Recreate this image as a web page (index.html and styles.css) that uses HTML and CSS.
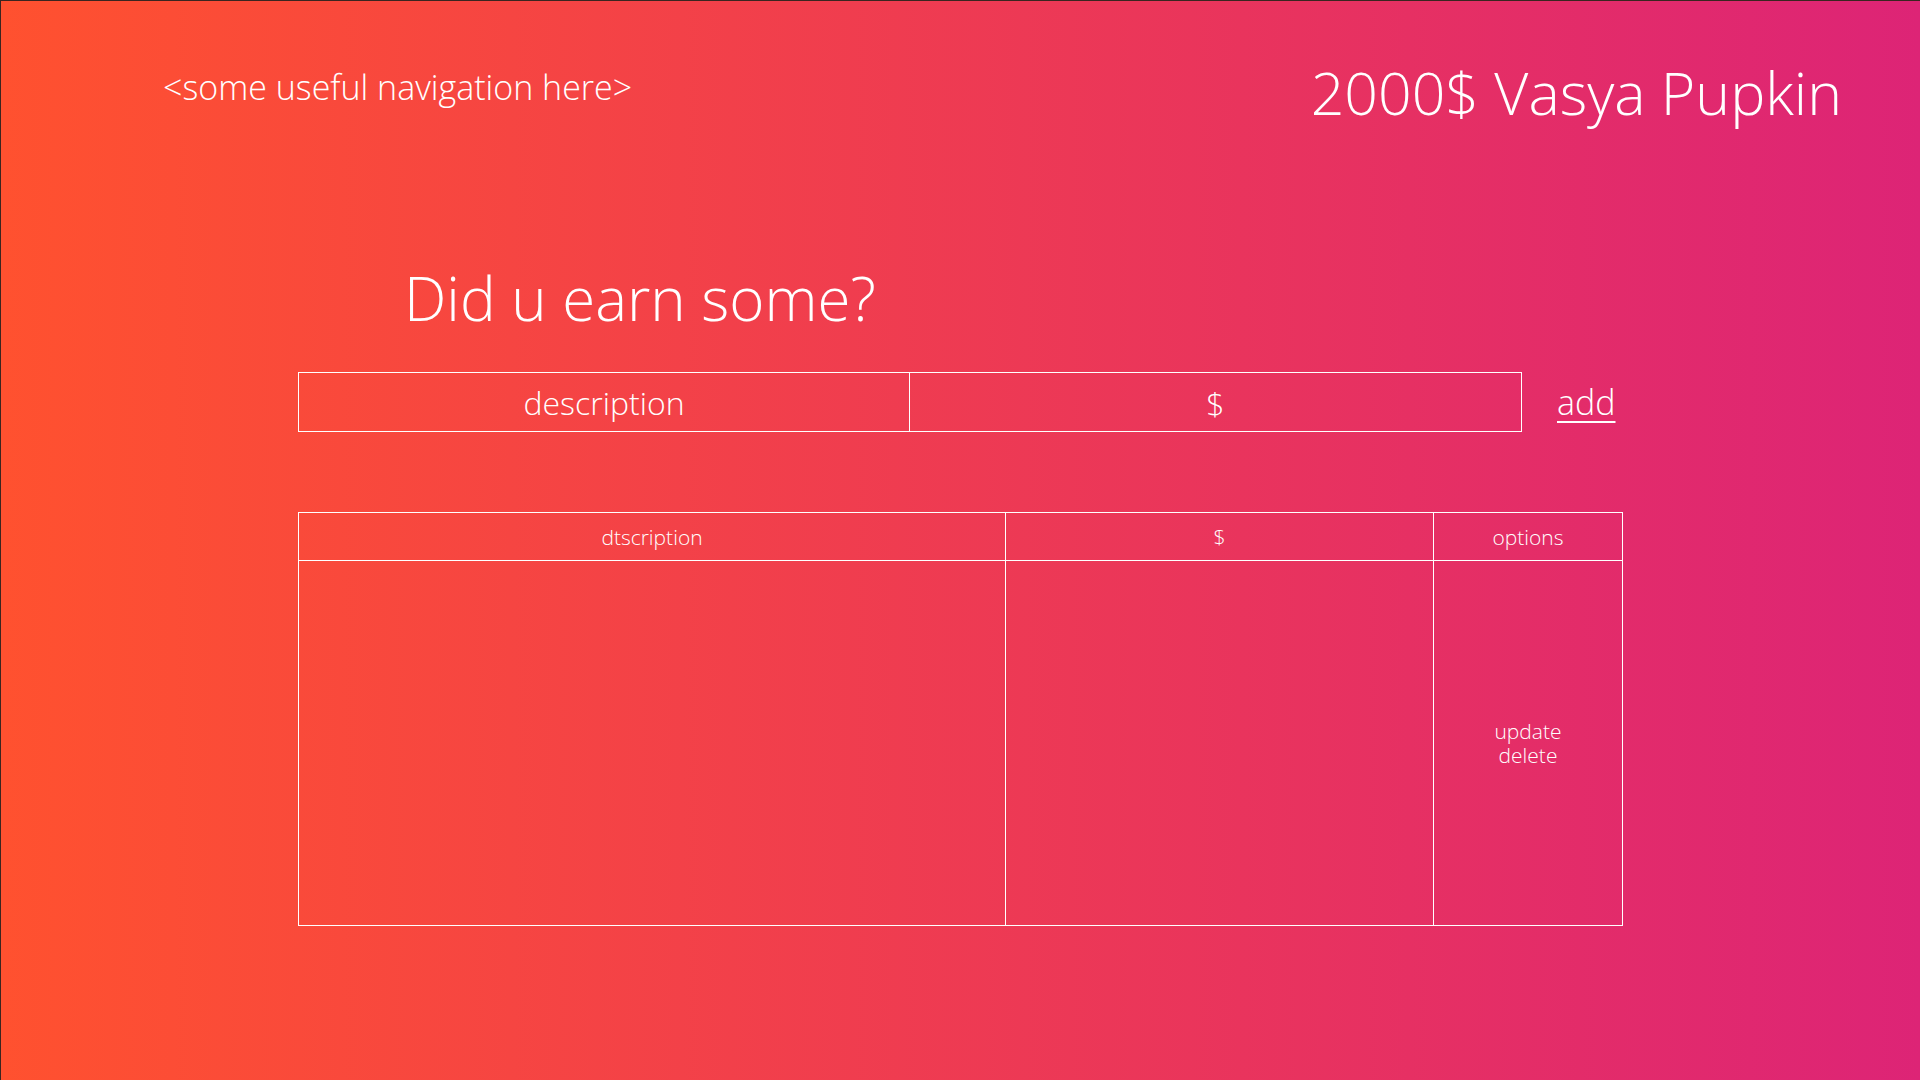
FILE: index.html
```html
<!DOCTYPE html>
<html>
<head>
<meta charset="utf-8">
<link rel="stylesheet" href="styles.css">
</head>
<body>
<div class="page">
  <header class="top">
    <div class="nav">&lt;some useful navigation here&gt;</div>
    <div class="user">2000$ Vasya Pupkin</div>
  </header>
  <main class="main">
    <h1 class="question">Did u earn some?</h1>
    <form class="add-form">
      <input class="field" type="text" placeholder="description">
      <input class="field" type="text" placeholder="$">
      <a class="add" href="#">add</a>
    </form>
    <table class="list">
      <thead>
        <tr><th class="c-desc">dtscription</th><th class="c-sum">$</th><th class="c-opt">options</th></tr>
      </thead>
      <tbody>
        <tr><td></td><td></td><td class="opts"><div>update</div><div>delete</div></td></tr>
      </tbody>
    </table>
  </main>
</div>
</body>
</html>
```
FILE: styles.css
```css
html, body {
  margin: 0;
  padding: 0;
  height: 100%;
}
body {
  font-family: "Open Sans", "Lato", sans-serif;
  font-weight: 300;
  color: #fff;
  background: #2a2a2a;
}
.page {
  box-sizing: border-box;
  height: 1080px;
  border-top: 1px solid #3a2520;
  border-left: 1px solid #3a2520;
  background: linear-gradient(to right, #ff512f, #dd2476);
  overflow: hidden;
}
.top {
  display: flex;
  justify-content: space-between;
  align-items: flex-start;
  padding: 61px 78px 0 162px;
}
.nav {
  margin-top: 8px;
  font-size: 34px;
  line-height: 1;
}
.user {
  margin-top: 1px;
  font-size: 59px;
  line-height: 1;
}
.main {
  margin-left: 297px;
  width: 1325px;
}
.question {
  margin: 146px 0 0 106px;
  font-size: 60px;
  font-weight: 300;
  line-height: 1;
}
.add-form {
  display: flex;
  align-items: center;
  margin-top: 44px;
}
.field {
  box-sizing: border-box;
  width: 612px;
  height: 60px;
  margin: 0;
  border: 1px solid #fff;
  background: transparent;
  color: #fff;
  font-family: inherit;
  font-weight: 300;
  font-size: 32px;
  text-align: center;
  outline: none;
}
.field + .field {
  border-left: none;
}
.field::placeholder {
  color: #fff;
  opacity: 1;
}
.add {
  margin-left: 35px;
  color: #fff;
  font-size: 34px;
  text-decoration: underline;
  text-underline-offset: 6px;
  text-decoration-thickness: 2px;
}
.list {
  margin-top: 80px;
  width: 1325px;
  border-collapse: collapse;
  font-size: 21px;
}
.list th, .list td {
  border: 1px solid #fff;
  font-weight: 300;
  text-align: center;
  padding: 0;
}
.list th {
  height: 47px;
}
.c-desc { width: 706px; }
.c-sum { width: 427px; }
.list td {
  height: 364px;
  vertical-align: middle;
}
.opts {
  line-height: 24px;
}
```
